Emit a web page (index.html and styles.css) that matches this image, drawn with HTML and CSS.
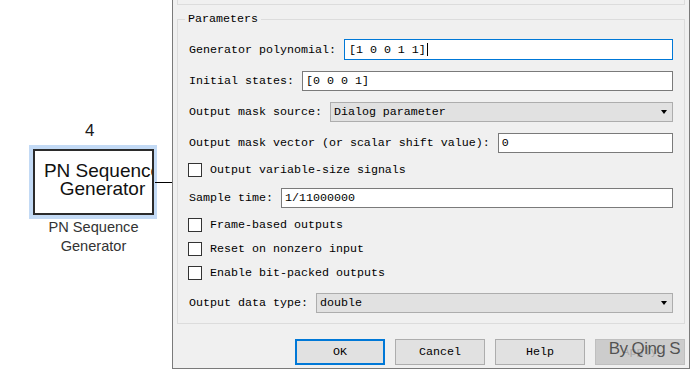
FILE: index.html
```html
<!DOCTYPE html>
<html lang="en">
<head>
    <meta charset="UTF-8">
    <meta name="viewport" content="width=device-width, initial-scale=1.0">
    <title>Block Parameters: PN Sequence Generator</title>
    <link rel="stylesheet" href="styles.css">
</head>
<body>
<div class="page">
    <!-- model canvas -->
    <div class="canvas">
        <div class="block-num">4</div>
        <div class="block-sel">
            <div class="block">
                <div class="block-text"><span>PN Sequence</span><span>Generator</span></div>
            </div>
        </div>
        <div class="wire"></div>
        <div class="block-name">PN Sequence<br>Generator</div>
    </div>

    <!-- parameter dialog -->
    <div class="dialog">
        <div class="top-group"></div>
        <fieldset class="params">
            <legend>Parameters</legend>
            <div class="row field">
                <span class="lbl">Generator polynomial:</span>
                <div class="edit focus">[1 0 0 1 1]<span class="caret"></span></div>
            </div>
            <div class="row field">
                <span class="lbl">Initial states:</span>
                <div class="edit">[0 0 0 1]</div>
            </div>
            <div class="row field">
                <span class="lbl">Output mask source:</span>
                <div class="combo">Dialog parameter</div>
            </div>
            <div class="row field">
                <span class="lbl">Output mask vector (or scalar shift value):</span>
                <div class="edit">0</div>
            </div>
            <div class="row check">
                <span class="box"></span>
                <span class="lbl">Output variable-size signals</span>
            </div>
            <div class="row field">
                <span class="lbl">Sample time:</span>
                <div class="edit">1/11000000</div>
            </div>
            <div class="row check">
                <span class="box"></span>
                <span class="lbl">Frame-based outputs</span>
            </div>
            <div class="row check">
                <span class="box"></span>
                <span class="lbl">Reset on nonzero input</span>
            </div>
            <div class="row check">
                <span class="box"></span>
                <span class="lbl">Enable bit-packed outputs</span>
            </div>
            <div class="row field last">
                <span class="lbl">Output data type:</span>
                <div class="combo">double</div>
            </div>
        </fieldset>
        <div class="buttons">
            <button class="btn default">OK</button>
            <button class="btn">Cancel</button>
            <button class="btn">Help</button>
            <button class="btn disabled">Apply</button>
        </div>
        <div class="watermark">By Qing S</div>
    </div>
</div>
</body>
</html>
```

FILE: styles.css
```css
body{
    margin: 0;
    background: #fff;
    overflow: hidden;
}
.page{
    display: flex;
    width: 690px;
    height: 369px;
}

/* canvas side */
.canvas{
    position: relative;
    width: 172px;
    flex: none;
    font-family: "Liberation Sans", Arial, sans-serif;
}
.block-num{
    position: absolute;
    left: 85px;
    top: 121px;
    font-size: 17px;
    color: #1a1a1a;
}
.block-sel{
    position: absolute;
    left: 29px;
    top: 145px;
    width: 128px;
    height: 74px;
    background: #c3daf5;
    padding: 4px 3px 4px 4px;
    box-sizing: border-box;
}
.block{
    height: 100%;
    border: 2px solid #2b2b2b;
    background: #fff;
    box-sizing: border-box;
    overflow: hidden;
}
.block-text{
    width: 135px;
    height: 100%;
    display: flex;
    flex-direction: column;
    align-items: center;
    justify-content: center;
    padding-bottom: 4px;
    box-sizing: border-box;
    font-size: 19px;
    line-height: 18px;
    color: #111;
    white-space: nowrap;
}
.wire{
    position: absolute;
    left: 155px;
    top: 182px;
    width: 17px;
    height: 1px;
    background: #000;
}
.block-name{
    position: absolute;
    left: 29px;
    top: 218px;
    width: 129px;
    text-align: center;
    font-size: 14.6px;
    line-height: 19px;
    color: #333;
}

/* dialog */
.dialog{
    position: relative;
    flex: 1;
    height: 369px;
    box-sizing: border-box;
    background: #f0f0f0;
    border-left: 1px solid #7a7a7a;
    border-right: 1px solid #7a7a7a;
    border-bottom: 1px solid #7a7a7a;
    padding: 0 4px;
    font-family: "Liberation Mono", "Courier New", monospace;
    font-size: 11.67px;
    color: #000;
}
.top-group{
    height: 4px;
    border: 1px solid #dcdcdc;
    border-top: none;
}
.params{
    margin: 7px 0 0 0;
    padding: 13px 11px 10px 11px;
    border: 1px solid #dcdcdc;
    display: flex;
    flex-direction: column;
    gap: 10px;
}
.params legend{
    margin-left: -4px;
    padding: 0 3px;
    line-height: 14px;
}
.row{
    display: flex;
    align-items: center;
}
.field{
    height: 21px;
    gap: 8px;
}
.field.last{
    margin-top: 2px;
}
.check{
    height: 14px;
    gap: 8px;
}
.lbl{
    white-space: nowrap;
}
.edit{
    flex: 1;
    height: 20px;
    box-sizing: border-box;
    border: 1px solid #7a7a7a;
    background: #fff;
    padding: 0 3px;
    line-height: 18px;
    white-space: nowrap;
    display: flex;
    align-items: center;
}
.edit.focus{
    height: 21px;
    border-color: #0078d7;
    padding-left: 4px;
}
.caret{
    width: 1px;
    height: 13px;
    background: #000;
    margin-left: 1px;
}
.combo{
    position: relative;
    flex: 1;
    height: 20px;
    box-sizing: border-box;
    border: 1px solid #adadad;
    background: #e1e1e1;
    padding: 0 3px;
    line-height: 18px;
}
.combo::after{
    content: "";
    position: absolute;
    right: 5px;
    top: 7px;
    border-left: 3.5px solid transparent;
    border-right: 3.5px solid transparent;
    border-top: 4px solid #000;
}
.box{
    width: 14px;
    height: 14px;
    box-sizing: border-box;
    border: 1px solid #333;
    background: #fff;
    margin-left: -1px;
}

.buttons{
    display: flex;
    justify-content: flex-end;
    gap: 10px;
    margin-top: 15px;
}
.btn{
    width: 90px;
    height: 26px;
    box-sizing: border-box;
    border: 1px solid #adadad;
    background: #e1e1e1;
    font-family: inherit;
    font-size: inherit;
    color: #000;
    padding: 0;
}
.btn.default{
    border: 2px solid #0078d7;
}
.btn.disabled{
    background: #cccccc;
    border-color: #bfbfbf;
    color: #a8a8a8;
}
.watermark{
    position: absolute;
    right: 9px;
    top: 339px;
    font-family: "Liberation Sans", Arial, sans-serif;
    font-size: 17px;
    letter-spacing: -0.6px;
    color: rgba(60, 60, 60, 0.85);
}
```
